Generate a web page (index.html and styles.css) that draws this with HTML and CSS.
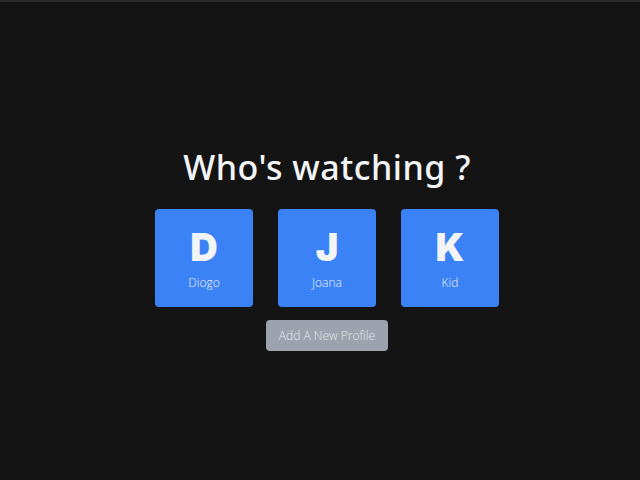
FILE: index.html
```html
<!DOCTYPE html>
<html>
<head>
<meta charset="utf-8">
<link rel="stylesheet" href="styles.css">
</head>
<body>
<div class="topbar"></div>
<main class="screen">
  <h1 class="title">Who's watching ?</h1>
  <div class="profiles">
    <div class="profile"><span class="initial">D</span><span class="name">Diogo</span></div>
    <div class="profile"><span class="initial">J</span><span class="name">Joana</span></div>
    <div class="profile"><span class="initial">K</span><span class="name">Kid</span></div>
  </div>
  <button class="add">Add A New Profile</button>
</main>
</body>
</html>
```
FILE: styles.css
```css
html, body {
  margin: 0;
  padding: 0;
  height: 100%;
  background: #141414;
  font-family: "Open Sans", "Noto Sans", sans-serif;
  overflow: hidden;
}
.topbar {
  height: 2px;
  background: #2b2b2b;
}
.screen {
  display: flex;
  flex-direction: column;
  align-items: center;
  padding-top: 145px;
  padding-left: 14px;
}
.title {
  margin: 0;
  color: #f3f4f6;
  font-family: "Noto Sans", "Open Sans", sans-serif;
  font-size: 34px;
  font-weight: 500;
  letter-spacing: 0.5px;
  line-height: 40px;
}
.profiles {
  display: flex;
  gap: 25px;
  margin-top: 22px;
}
.profile {
  width: 98px;
  height: 98px;
  background: #3b82f6;
  border-radius: 4px;
  display: flex;
  flex-direction: column;
  align-items: center;
  padding-top: 18px;
  box-sizing: border-box;
}
.initial {
  display: block;
  color: #f3f4f6;
  font-family: "Inter", "Noto Sans", sans-serif;
  font-weight: 900;
  font-size: 38px;
  line-height: 40px;
}
.name {
  display: block;
  color: #eef2ff;
  font-size: 12px;
  font-weight: 300;
  line-height: 16px;
  margin-top: 8px;
}
.add {
  margin-top: 13px;
  width: 122px;
  height: 31px;
  background: #9ca3af;
  border: none;
  border-radius: 4px;
  color: #e5e7eb;
  font-family: "Open Sans", sans-serif;
  font-size: 12px;
  font-weight: 300;
  padding: 0;
}
```
